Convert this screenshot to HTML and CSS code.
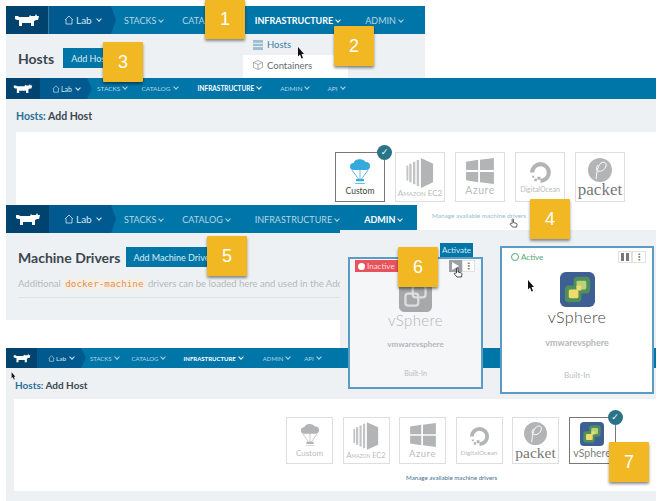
FILE: index.html
```html
<!DOCTYPE html>
<html lang="en">
<head>
    <meta charset="UTF-8">
    <title>Add vSphere machine driver</title>
    <link rel="stylesheet" href="styles.css">
</head>
<body>
    <svg class="defs" width="0" height="0">
        <defs>
            <symbol id="cow" viewBox="0 0 26 14">
                <path d="M1 3h3l1 1h10l1-2 1 1h4l1-2 1 2h2l-1 4h-2l-2 1v5h-3v-3H8v3H5V7H3L1 6z" fill="#fff"/>
            </symbol>
            <symbol id="house" viewBox="0 0 10 10">
                <path d="M1 5l4-4 4 4M2 4.500V9h6V4.500" fill="none" stroke="#d5e8f2" stroke-width="0.8"/>
            </symbol>
            <symbol id="cursor" viewBox="0 0 8 12">
                <path d="M1 0l6 7H4.500l1.500 4-1.500.6L3 7.600 1 9.500z" fill="#111"/>
            </symbol>
            <symbol id="hand" viewBox="0 0 10 12">
                <path d="M3.500 6V1.500a.8.800 0 011.500 0V5l3 .8c.8.200 1 .8.900 1.500L8.500 10H4L1.500 7.200c-.6-.8.300-1.600 1-1z" fill="#fff" stroke="#222" stroke-width="0.8"/>
            </symbol>
            <symbol id="cloud" viewBox="0 0 30 36">
                <path d="M7 15a4.500 4.500 0 010-9 8 6 0 0115-1 5 5 0 011 10z" fill="currentColor"/>
                <path d="M5 15l8 11M25 15l-8 11M15 15v11" fill="none" stroke="currentColor" stroke-width="1"/>
                <path d="M10 26h10v3H10zM9 31h12v1H9z" fill="currentColor"/>
            </symbol>
            <symbol id="ec2" viewBox="0 0 30 34">
                <path d="M16 1l13 6v20l-13 6z" fill="currentColor"/>
                <path d="M14 3v28h-2.500V3zM10 5v24H7.500V5zM6 7v20H3.500V7zM2.500 9v16H.5V9z" fill="currentColor" opacity=".8"/>
            </symbol>
            <symbol id="windows" viewBox="0 0 30 28">
                <path d="M0 4l13-2v11H0zM15 2l15-2v13H15zM0 15h13v11L0 24zM15 15h15v13l-15-2z" fill="currentColor"/>
            </symbol>
            <symbol id="ocean" viewBox="0 0 24 24">
                <path d="M12 22A10 10 0 102 12h4a6 6 0 116 6z" fill="currentColor"/>
                <path d="M9 16h3v3H9zM6 18h2.500v2.500H6zM4 15h2v2H4z" fill="currentColor"/>
            </symbol>
            <symbol id="pball" viewBox="0 0 24 24">
                <circle cx="12" cy="12" r="12" fill="currentColor"/>
                <path d="M8 21c1-7 1-12 5-16 3-2 6 0 5 3-1 4-5 6-8 5-2-1-2-4 0-6" fill="none" stroke="#fff" stroke-width="1"/>
            </symbol>
            <symbol id="vmware" viewBox="0 0 36 36">
                <rect width="36" height="36" rx="6" fill="#3d5f93"/>
                <rect x="14" y="5" width="17" height="17" rx="4" fill="#4f8f5a"/>
                <rect x="5" y="14" width="17" height="17" rx="4" fill="#4f8f5a"/>
                <rect x="17" y="9" width="10" height="9" rx="1.500" fill="#b9d27a"/>
                <rect x="9" y="18" width="10" height="9" rx="1.500" fill="#f0dc6c"/>
                <rect x="17" y="14" width="5" height="5" fill="#f0dc6c"/>
            </symbol>
            <symbol id="vmware-grey" viewBox="0 0 36 36">
                <rect width="36" height="36" rx="6" fill="#a6a8aa"/>
                <rect x="15" y="7" width="14" height="13" rx="3" fill="none" stroke="#dcdddd" stroke-width="2.500"/>
                <rect x="7" y="16" width="14" height="13" rx="3" fill="none" stroke="#dcdddd" stroke-width="2.500"/>
            </symbol>
        </defs>
    </svg>

    <!-- 1: hosts page with the infrastructure menu open -->
    <section class="shot shot-hosts">
        <nav class="topbar">
            <div class="logo"><svg width="26" height="14"><use href="#cow"/></svg></div>
            <div class="env"><svg width="10" height="10"><use href="#house"/></svg>Lab<i class="caret"></i></div>
            <a>STACKS<i class="caret"></i></a>
            <a>CATALOG<i class="caret"></i></a>
            <a class="on">INFRASTRUCTURE<i class="caret"></i></a>
            <a>ADMIN<i class="caret"></i></a>
        </nav>
        <div class="page-head">
            <h1>Hosts</h1>
            <button class="btn">Add Host</button>
        </div>
        <div class="menu">
            <div class="menu-row active">
                <svg width="10" height="10"><rect width="10" height="10" fill="#9dbdd2"/><path d="M0 3.300h10M0 6.600h10" stroke="#e7eff4"/></svg>Hosts
            </div>
            <div class="menu-row">
                <svg width="10" height="10" viewBox="0 0 10 10"><path d="M.5 2.500L5 .5l4.500 2v5L5 9.500l-4.500-2zM.5 2.500L5 4.500l4.500-2M5 4.500v5" fill="none" stroke="#8a8f92" stroke-width=".7"/></svg>Containers
            </div>
        </div>
    </section>

    <!-- 2: add host, custom selected -->
    <section class="shot shot-add">
        <nav class="topbar small">
            <div class="logo"><svg width="20" height="11"><use href="#cow"/></svg></div>
            <div class="env"><svg width="8" height="8"><use href="#house"/></svg>Lab<i class="caret"></i></div>
            <a>STACKS<i class="caret"></i></a>
            <a>CATALOG<i class="caret"></i></a>
            <a class="on">INFRASTRUCTURE<i class="caret"></i></a>
            <a>ADMIN<i class="caret"></i></a>
            <a>API<i class="caret"></i></a>
        </nav>
        <h2 class="crumb"><span>Hosts:</span> Add Host</h2>
        <div class="panel">
            <div class="drivers">
                <div class="driver picked">
                    <svg class="art sky" width="24" height="29"><use href="#cloud"/></svg>
                    <span class="name custom dark">Custom</span>
                    <b class="tick">✓</b>
                </div>
                <div class="driver"><svg class="art" width="28" height="32"><use href="#ec2"/></svg><span class="name ec2">Amazon EC2</span></div>
                <div class="driver"><svg class="art" width="28" height="26"><use href="#windows"/></svg><span class="name azure">Azure</span></div>
                <div class="driver"><svg class="art" width="25" height="25"><use href="#ocean"/></svg><span class="name ocean">DigitalOcean</span></div>
                <div class="driver"><svg class="art" width="24" height="24"><use href="#pball"/></svg><span class="name packet">packet</span></div>
            </div>
        </div>
    </section>

    <!-- 4: add host, vsphere selected -->
    <section class="shot shot-final">
        <nav class="topbar tiny">
            <div class="logo"><svg width="18" height="10"><use href="#cow"/></svg></div>
            <div class="env"><svg width="7" height="7"><use href="#house"/></svg>Lab<i class="caret"></i></div>
            <a>STACKS<i class="caret"></i></a>
            <a>CATALOG<i class="caret"></i></a>
            <a class="on">INFRASTRUCTURE<i class="caret"></i></a>
            <a>ADMIN<i class="caret"></i></a>
            <a>API<i class="caret"></i></a>
        </nav>
        <h2 class="crumb"><span>Hosts:</span> Add Host</h2>
        <div class="panel">
            <div class="drivers">
                <div class="driver"><svg class="art" width="22" height="26"><use href="#cloud"/></svg><span class="name custom">Custom</span></div>
                <div class="driver"><svg class="art" width="26" height="30"><use href="#ec2"/></svg><span class="name ec2">Amazon EC2</span></div>
                <div class="driver"><svg class="art" width="26" height="24"><use href="#windows"/></svg><span class="name azure">Azure</span></div>
                <div class="driver"><svg class="art" width="23" height="23"><use href="#ocean"/></svg><span class="name ocean">DigitalOcean</span></div>
                <div class="driver"><svg class="art" width="23" height="23"><use href="#pball"/></svg><span class="name packet">packet</span></div>
                <div class="driver picked"><svg class="art" width="24" height="24"><use href="#vmware"/></svg><span class="name vs">vSphere</span><b class="tick">✓</b></div>
            </div>
            <a class="manage">Manage available machine drivers</a>
        </div>
    </section>

    <!-- 3: machine drivers page -->
    <section class="shot shot-drivers">
        <nav class="topbar">
            <div class="logo"><svg width="26" height="14"><use href="#cow"/></svg></div>
            <div class="env"><svg width="10" height="10"><use href="#house"/></svg>Lab<i class="caret"></i></div>
            <a>STACKS<i class="caret"></i></a>
            <a>CATALOG<i class="caret"></i></a>
            <a>INFRASTRUCTURE<i class="caret"></i></a>
            <a class="on">ADMIN<i class="caret"></i></a>
        </nav>
        <div class="page-head">
            <h1>Machine Drivers</h1>
            <button class="btn">Add Machine Driver</button>
        </div>
        <p class="intro">Additional <code>docker-machine</code> drivers can be loaded here and used in the Add Host screen.</p>
    </section>

    <div class="cards-bg"></div>
    <a class="manage-top">Manage available machine drivers</a>

    <article class="card card-off">
        <div class="card-top">
            <span class="state-off"><i></i>Inactive</span>
            <span class="tools">
                <b class="tool play"><svg width="7" height="8"><path d="M0 0l7 4-7 4z" fill="#fff"/></svg></b>
                <b class="tool">⋮</b>
            </span>
        </div>
        <svg class="logo-mark" width="33" height="33"><use href="#vmware-grey"/></svg>
        <div class="mark-name">vSphere</div>
        <div class="driver-id">vmwarevsphere</div>
        <div class="built">Built-In</div>
    </article>

    <article class="card card-on">
        <div class="card-top">
            <span class="state-on"><i></i>Active</span>
            <span class="tools">
                <b class="tool"><svg width="8" height="8"><path d="M0 0h3v8H0zM5 0h3v8H5z" fill="#777"/></svg></b>
                <b class="tool">⋮</b>
            </span>
        </div>
        <svg class="logo-mark" width="35" height="35"><use href="#vmware"/></svg>
        <div class="mark-name">vSphere</div>
        <div class="driver-id">vmwarevsphere</div>
        <div class="built">Built-In</div>
    </article>

    <div class="tip">Activate</div>

    <svg class="pointer p1" width="8" height="12"><use href="#cursor"/></svg>
    <svg class="pointer p2" width="8" height="12"><use href="#cursor"/></svg>
    <svg class="pointer p3" width="5" height="8"><use href="#cursor"/></svg>
    <svg class="pointer h1" width="9" height="11"><use href="#hand"/></svg>
    <svg class="pointer h2" width="10" height="12"><use href="#hand"/></svg>

    <div class="step s1">1</div>
    <div class="step s2">2</div>
    <div class="step s3">3</div>
    <div class="step s4">4</div>
    <div class="step s5">5</div>
    <div class="step s6">6</div>
    <div class="step s7">7</div>
</body>
</html>
```

FILE: styles.css
```css
* {
    box-sizing: border-box;
}

html, body {
    margin: 0;
    width: 666px;
    height: 501px;
    overflow: hidden;
    background: #fff;
}

body {
    position: relative;
    font-family: Lato, "Open Sans", sans-serif;
    color: #3b4650;
}

.defs {
    position: absolute;
}

/* each screenshot sits on the canvas as its own window */
.shot {
    position: absolute;
    background: #eef1f3;
    overflow: hidden;
}

.shot-hosts {
    left: 6px;
    top: 6px;
    width: 419px;
    height: 72px;
}

.shot-add {
    left: 6px;
    top: 78px;
    width: 650px;
    height: 127px;
}

.shot-drivers {
    left: 6px;
    top: 205px;
    width: 411px;
    height: 115px;
}

.shot-final {
    left: 6px;
    top: 348px;
    width: 650px;
    height: 153px;
}

.topbar {
    display: flex;
    align-items: center;
    height: 28px;
    background: #0075a8;
    font-size: 9px;
    color: #b4d6e6;
}

.topbar > * {
    flex: none;
}

.topbar a {
    margin-right: 25px;
    white-space: nowrap;
}

.topbar a:first-of-type {
    margin-right: 19px;
}

.topbar a.on {
    color: #fff;
    font-weight: 700;
}

.logo {
    display: flex;
    align-items: center;
    justify-content: center;
    width: 43px;
    height: 100%;
    background: #00436e;
}

.env {
    display: flex;
    align-items: center;
    gap: 2px;
    width: 67px;
    height: 100%;
    padding-left: 15px;
    margin-right: 8px;
    background: #005a8f;
    color: #d5e8f2;
    font-size: 10px;
    clip-path: polygon(0 0, calc(100% - 5px) 0, 100% 50%, calc(100% - 5px) 100%, 0 100%);
}

.shot-hosts .logo {
    border-right: 1px solid #3c7aa0;
}

.caret {
    display: inline-block;
    width: 4px;
    height: 4px;
    margin: 0 0 2px 3px;
    border-right: 1px solid currentColor;
    border-bottom: 1px solid currentColor;
    transform: rotate(45deg);
}

.topbar.small {
    height: 21px;
    font-size: 6.500px;
}

.small .logo {
    width: 34px;
}

.small .env {
    width: 52px;
    gap: 1px;
    padding-left: 12px;
    margin-right: 5px;
    font-size: 7px;
}

.small a,
.small a:first-of-type {
    margin-right: 14px;
}

.small a.on {
    margin: 0 19px 0 6px;
}

.small a:nth-of-type(4) {
    margin-right: 18px;
}

.topbar.tiny {
    height: 20px;
    font-size: 6px;
}

.tiny .logo {
    width: 31px;
}

.tiny .env {
    width: 49px;
    gap: 1px;
    padding-left: 11px;
    margin-right: 4px;
    font-size: 6.500px;
}

.tiny a,
.tiny a:first-of-type {
    margin-right: 13px;
}

.tiny a.on {
    margin: 0 20px 0 5px;
}

.tiny a:nth-of-type(4) {
    margin-right: 14px;
}

.page-head {
    display: flex;
    align-items: center;
    gap: 9px;
    padding: 14px 12px 0;
}

h1 {
    margin: 0;
    font-size: 14px;
    font-weight: 700;
    color: #3b4650;
}

.btn {
    height: 20px;
    padding: 0 8px;
    border: 0;
    background: #0075a8;
    color: #dcecf4;
    font: 9px Lato, sans-serif;
}

.shot-drivers .btn {
    width: 90px;
    padding: 0 0 0 7px;
    text-align: left;
    white-space: nowrap;
}

.shot-drivers .page-head {
    padding-top: 14px;
    gap: 6px;
}

.intro {
    margin: 11px 12px 0;
    padding-bottom: 8px;
    border-bottom: 1px solid #dfe2e4;
    font-size: 9.500px;
    color: #b4b8bb;
    white-space: nowrap;
}

.intro code {
    padding: 1px 2px;
    background: #f6efe8;
    color: #e0924a;
    font: 9.300px "DejaVu Sans Mono", monospace;
}

.menu {
    position: absolute;
    left: 237px;
    top: 28px;
    width: 105px;
    background: #fff;
    font-size: 9.500px;
    color: #666d72;
}

.menu-row {
    display: flex;
    align-items: center;
    gap: 4px;
    height: 23px;
    padding: 0 0 3px 10px;
}

.menu-row.active {
    height: 21px;
    padding-bottom: 0;
    background: #eef1f3;
    color: #3b7ea5;
}

.crumb {
    margin: 0;
    padding: 11px 10px 0;
    height: 33px;
    font-size: 10.500px;
    font-weight: 700;
    color: #3b4650;
}

.crumb span {
    color: #2a6f97;
}

.shot-add .panel {
    height: 73px;
    margin-left: 10px;
    background: #fff;
}

.shot-final .crumb {
    padding: 11px 9px 0;
    height: 31px;
    font-size: 10px;
}

.shot-final .panel {
    height: 92px;
    margin-left: 8px;
    background: #fff;
}

.drivers {
    display: flex;
    gap: 10px;
}

.shot-add .drivers {
    padding: 20px 0 0 319px;
}

.shot-final .drivers {
    padding: 18px 0 0 272px;
    gap: 9.500px;
}

.driver {
    position: relative;
    display: flex;
    flex-direction: column;
    align-items: center;
    justify-content: center;
    width: 50px;
    height: 50px;
    border: 1px solid #dedede;
    color: #b9bbbc;
}

.shot-final .driver {
    width: 47px;
    height: 47px;
}

.driver.picked {
    border-color: #777;
}

.art {
    flex: none;
    color: #b3b4b5;
}

.art.sky {
    color: #35a9dc;
}

.name {
    font-size: 8px;
    line-height: 9px;
    white-space: nowrap;
}

.name.dark {
    color: #444;
}

.name.custom {
    font-size: 8.500px;
}

.name.ec2 {
    font-variant: small-caps;
    font-size: 8px;
}

.name.azure {
    margin-top: 1px;
    font-size: 10.500px;
    line-height: 11px;
    letter-spacing: .5px;
}

.name.ocean {
    font-size: 7px;
}

.name.packet {
    font: 17px/15px "Liberation Serif", serif;
    color: #777;
}

.shot-final .name.custom {
    font-size: 8px;
}

.shot-final .name.ec2 {
    font-size: 7.300px;
}

.shot-final .name.azure {
    font-size: 9.500px;
}

.shot-final .name.ocean {
    font-size: 6.500px;
}

.shot-final .name.packet {
    font-size: 15.500px;
}

.name.vs {
    margin-top: 1px;
    font-size: 10.500px;
    line-height: 12px;
    color: #808080;
}

.tick {
    position: absolute;
    right: -8px;
    top: -8px;
    width: 15px;
    height: 15px;
    border-radius: 50%;
    background: #2a7487;
    color: #fff;
    font: 700 9px/15px "DejaVu Sans", sans-serif;
    text-align: center;
}

.manage {
    display: block;
    margin-top: 10px;
    padding-left: 392px;
    font-size: 6.200px;
    color: #3b6f8f;
    white-space: nowrap;
}

.manage-top {
    position: absolute;
    left: 432px;
    top: 212px;
    font-size: 6.400px;
    color: #8fc0d2;
    white-space: nowrap;
}

.cards-bg {
    position: absolute;
    left: 340px;
    top: 230px;
    width: 316px;
    height: 118px;
    background: #eef1f3;
}

.card {
    position: absolute;
    display: flex;
    flex-direction: column;
    align-items: center;
    border: 2px solid #5a9cc5;
    text-align: center;
}

.card-off {
    left: 348px;
    top: 257px;
    width: 135px;
    height: 132px;
    background: #f4f6f8;
}

.card-on {
    left: 500px;
    top: 246px;
    width: 154px;
    height: 148px;
    background: #fff;
}

.card-top {
    display: flex;
    justify-content: space-between;
    align-items: flex-start;
    align-self: stretch;
    height: 20px;
    padding: 1px 6px 0 5px;
    font-size: 8px;
}

.card-on .card-top {
    padding: 3px 6px 0 9px;
}

.state-off {
    display: flex;
    align-items: center;
    gap: 2px;
    height: 12px;
    padding: 0 3px;
    background: #e7535c;
    color: #fbdcde;
}

.state-off i {
    width: 7px;
    height: 7px;
    border-radius: 50%;
    background: #fff;
}

.state-on {
    display: flex;
    align-items: center;
    gap: 2px;
    height: 12px;
    color: #53a873;
}

.state-on i {
    width: 8px;
    height: 8px;
    border: 1px solid #53a873;
    border-radius: 50%;
}

.tools {
    display: flex;
}

.tool {
    display: flex;
    align-items: center;
    justify-content: center;
    width: 13px;
    height: 12px;
    border: 1px solid #e1e1e1;
    background: #fff;
    color: #777;
    font: 700 9px/1 "DejaVu Sans", sans-serif;
}

.card-on .tool {
    width: 14px;
}

.tool.play {
    background: #9aa0a5;
    border-color: #9aa0a5;
}

.card-on .logo-mark {
    margin-top: 4px;
}

.mark-name {
    font-size: 15px;
    font-weight: 300;
    line-height: 17px;
    letter-spacing: .4px;
    color: #b3b6b8;
}

.card-on .mark-name {
    font-size: 16px;
    line-height: 20px;
    color: #444;
}

.driver-id {
    margin-top: 10px;
    font-size: 8px;
    line-height: 10px;
    font-weight: 700;
    color: #b4b7b9;
}

.card-on .driver-id {
    margin-top: 11px;
    font-size: 9px;
}

.built {
    margin-top: 20px;
    font-size: 7px;
    line-height: 9px;
    color: #b9bcbe;
}

.card-on .built {
    margin-top: 22px;
    font-size: 8px;
    line-height: 10px;
}

.tip {
    position: absolute;
    left: 440px;
    top: 243px;
    width: 33px;
    height: 14px;
    background: #0075a8;
    color: #d8ebf4;
    font-size: 8px;
    line-height: 14px;
    text-align: center;
}

.pointer {
    position: absolute;
}

.p1 {
    left: 297px;
    top: 47px;
}

.p2 {
    left: 527px;
    top: 280px;
}

.p3 {
    left: 11px;
    top: 372px;
}

.h1 {
    left: 509px;
    top: 218px;
}

.h2 {
    left: 453px;
    top: 267px;
}

.step {
    position: absolute;
    width: 40px;
    height: 40px;
    border-radius: 1px;
    background: #f2b824;
    box-shadow: 0 2px 3px rgba(0, 0, 0, .45);
    color: #fff;
    font: 18px/40px "Liberation Sans", sans-serif;
    text-align: center;
}

.s1 { left: 205px; top: -1px; }
.s2 { left: 334px; top: 26px; }
.s3 { left: 103px; top: 42px; }
.s4 { left: 530px; top: 199px; }
.s5 { left: 207px; top: 236px; }
.s6 { left: 398px; top: 247px; }
.s7 { left: 609px; top: 442px; }
```
